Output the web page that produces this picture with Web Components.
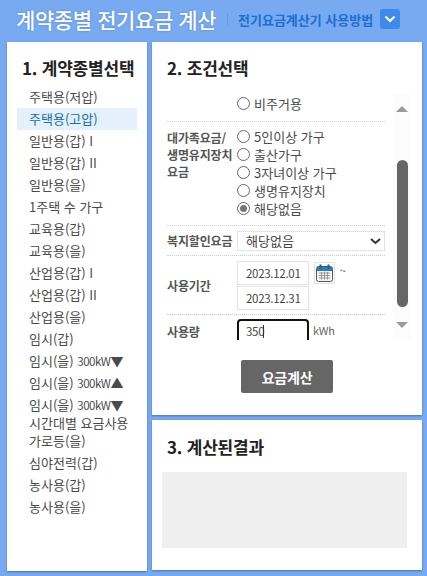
<!DOCTYPE html>
<html lang="ko">
<head>
<meta charset="utf-8">
<title>계약종별 전기요금 계산</title>
<style>
  html, body { margin: 0; padding: 0; }
  body {
    width: 427px;
    height: 576px;
    overflow: hidden;
    background: #78aaf2;
    font-family: "Noto Sans CJK KR", "Noto Sans", sans-serif;
  }
</style>
</head>
<body>
<fee-app></fee-app>
<script>
const FONT = '"Noto Sans CJK KR", "Noto Sans", sans-serif';

class FeeHeader extends HTMLElement {
  connectedCallback() {
    this.attachShadow({ mode: 'open' });
    this.shadowRoot.innerHTML = `
      <style>
        :host { display: flex; align-items: center; height: 42px; padding: 0 0 4px 16px; box-sizing: border-box; font-family: ${FONT}; }
        h1 { margin: 0; width: 200px; font-size: 21px; font-weight: 500; color: #fff; letter-spacing: -.4px; text-shadow: 0 0 2px rgba(40,90,170,.5); white-space: nowrap; }
        .sep { width: 1px; height: 12px; background: #5f97e6; margin: 0 10px 0 11px; }
        a { width: 135px; font-size: 13px; font-weight: 700; color: #1a6fd0; white-space: nowrap; }
        .btn { width: 20px; height: 20px; margin-left: 7px; background: #3d8aea; border-radius: 3px; display: flex; align-items: center; justify-content: center; }
      </style>
      <h1>계약종별 전기요금 계산</h1>
      <span class="sep"></span>
      <a>전기요금계산기 사용방법</a>
      <span class="btn"><svg width="12" height="8" viewBox="0 0 12 8"><path d="M1.5 1.5 6 6l4.5-4.5" fill="none" stroke="#fff" stroke-width="2.2"/></svg></span>
    `;
  }
}

class FeePanel extends HTMLElement {
  connectedCallback() {
    this.attachShadow({ mode: 'open' });
    this.shadowRoot.innerHTML = `
      <style>
        :host { display: block; background: #fff; box-shadow: 0 1px 2px rgba(40,70,120,.55); box-sizing: border-box; font-family: ${FONT}; }
        h2 { margin: 0; font-size: 17px; font-weight: 700; line-height: 22px; color: #222; letter-spacing: -.2px; white-space: nowrap; }
      </style>
      <h2 part="title">${this.getAttribute('heading')}</h2>
      <slot></slot>
    `;
  }
}

class TypeList extends HTMLElement {
  connectedCallback() {
    const kw = '<span class="kw">300kW</span>';
    const items = [
      ['주택용(저압)'], ['주택용(고압)', 'on'], ['일반용(갑) I'], ['일반용(갑) II'], ['일반용(을)'],
      ['1주택 수 가구'], ['교육용(갑)'], ['교육용(을)'], ['산업용(갑) I'], ['산업용(갑) II'],
      ['산업용(을)'], ['임시(갑)'], [`임시(을) ${kw}▼`], [`임시(을) ${kw}▲`], [`임시(을) ${kw}▼`],
      ['시간대별 요금사용', 'tight'], ['가로등(을)'], ['심야전력(갑)'], ['농사용(갑)'], ['농사용(을)']
    ];
    this.attachShadow({ mode: 'open' });
    this.shadowRoot.innerHTML = `
      <style>
        :host { display: block; margin-top: 7px; font-family: ${FONT}; }
        ul { list-style: none; margin: 0; padding: 0; }
        li { height: 22px; line-height: 22px; padding-left: 12px; font-size: 13px; color: #4a4a4a; white-space: nowrap; }
        li.on { background: #e4f0fc; color: #14709e; }
        li.tight { height: 14px; line-height: 14px; }
        .kw { font-size: 11.5px; letter-spacing: -.5px; }
      </style>
      <ul>${items.map(([t, c]) => `<li class="${c || ''}">${t}</li>`).join('')}</ul>
    `;
  }
}

class FormRow extends HTMLElement {
  connectedCallback() {
    this.attachShadow({ mode: 'open' });
    this.shadowRoot.innerHTML = `
      <style>
        :host { display: grid; grid-template-columns: 70px 1fr; align-items: center; border-bottom: 1px dotted #ccc; box-sizing: border-box; font-family: ${FONT}; }
        :host([last]) { border-bottom: 0; }
        :host([top]) { align-items: start; }
        .label { font-size: 12px; line-height: 17px; font-weight: 700; color: #555; letter-spacing: -.15px; white-space: nowrap; }
      </style>
      <div class="label"><slot name="label"></slot></div>
      <div><slot></slot></div>
    `;
  }
}

class RadioOption extends HTMLElement {
  connectedCallback() {
    const on = this.hasAttribute('checked');
    this.attachShadow({ mode: 'open' });
    this.shadowRoot.innerHTML = `
      <style>
        :host { display: flex; align-items: center; height: 18px; font-family: ${FONT}; font-size: 13px; color: #4a4a4a; white-space: nowrap; }
        i { width: 13px; height: 13px; box-sizing: border-box; border: 1px solid #666; border-radius: 50%; background: #fff; margin-right: 4px; display: flex; align-items: center; justify-content: center; flex: none; }
        b { width: 7px; height: 7px; border-radius: 50%; background: #777; }
      </style>
      <i>${on ? '<b></b>' : ''}</i><slot></slot>
    `;
  }
}

class FieldBox extends HTMLElement {
  connectedCallback() {
    this.attachShadow({ mode: 'open' });
    this.shadowRoot.innerHTML = `
      <style>
        :host { display: flex; align-items: center; box-sizing: border-box; width: 72px; height: 24px; padding-left: 8px; border: 1px solid #e2e2e2; font-family: ${FONT}; font-size: 11.5px; color: #444; white-space: nowrap; letter-spacing: -.3px; background: #fff; flex: none; }
        :host([wide]) { width: 148px; height: 20px; font-size: 13px; letter-spacing: 0; position: relative; }
        :host([focus]) { height: 28px; border: 2px solid #111; border-radius: 4px; padding: 0 0 4px 7px; }
        svg { position: absolute; right: 3px; top: 6px; }
        u { display: inline-block; width: 1px; height: 13px; background: #333; margin-left: -1px; }
      </style>
      <slot></slot>
      ${this.hasAttribute('wide') ? '<svg width="11" height="7" viewBox="0 0 11 7"><path d="M1 1l4.5 4L10 1" fill="none" stroke="#333" stroke-width="2"/></svg>' : ''}
      ${this.hasAttribute('focus') ? '<u></u>' : ''}
    `;
  }
}

class CalIcon extends HTMLElement {
  connectedCallback() {
    this.attachShadow({ mode: 'open' });
    this.shadowRoot.innerHTML = `
      <style>
        :host { display: flex; align-items: center; justify-content: center; width: 21px; height: 22px; box-sizing: border-box; border: 1px solid #e2e2e2; }
      </style>
      <svg width="17" height="18" viewBox="0 0 17 18">
        <rect x=".5" y="2.5" width="16" height="15" rx="2" fill="#f3f3f3" stroke="#555"/>
        <path d="M1 3h15v4H1z" fill="#2a7fb8"/>
        <path d="M4.5 .5v4M12.5 .5v4" stroke="#1d5f8f" stroke-width="2"/>
        <path d="M3 9h11M3 11.5h11M3 14h11M5.5 8v7.5M8.5 8v7.5M11.5 8v7.5" stroke="#888" stroke-width=".8"/>
      </svg>
    `;
  }
}

class FakeScrollbar extends HTMLElement {
  connectedCallback() {
    this.attachShadow({ mode: 'open' });
    this.shadowRoot.innerHTML = `
      <style>
        :host { display: flex; flex-direction: column; align-items: center; width: 18px; margin: 8px 0 0 8px; background: #fcfcfc; }
        .up, .down { width: 0; height: 0; border-left: 6px solid transparent; border-right: 6px solid transparent; }
        .up { border-bottom: 6px solid #999; margin-top: 12px; }
        .down { border-top: 6px solid #999; margin-top: 15px; }
        .thumb { width: 11px; height: 147px; background: #666; border-radius: 6px; margin-top: 48px; }
      </style>
      <div class="up"></div><div class="thumb"></div><div class="down"></div>
    `;
  }
}

class ConditionForm extends HTMLElement {
  connectedCallback() {
    this.attachShadow({ mode: 'open' });
    this.shadowRoot.innerHTML = `
      <style>
        :host { display: block; font-family: ${FONT}; }
        .wrap { display: flex; height: 254px; margin-top: 7px; }
        .rows { width: 218px; overflow: hidden; }
        .dates { display: grid; grid-template-columns: 72px 21px auto; column-gap: 5px; row-gap: 1px; align-items: center; }
        .tilde { font-size: 11px; color: #555; align-self: start; margin-top: 1px; }
        .unit { display: flex; gap: 4px; align-items: flex-start; font-size: 11px; letter-spacing: -.3px; color: #666; }
        .unit span { margin-top: 3px; }
        .r1 { height: 36px; padding-top: 8px; box-sizing: border-box; }
        .r2 { height: 104px; padding-top: 5px; box-sizing: border-box; }
        .r2 [slot=label] { display: block; padding-top: 2px; }
        .r3 { height: 30px; }
        .r4 { height: 59px; }
        .r5 { height: 40px; padding-top: 4px; box-sizing: border-box; }
        .r5 [slot=label] { display: block; padding-top: 4px; }
        button { display: block; width: 92px; height: 33px; margin: 20px 0 0 74px; padding: 0; border: 0; border-radius: 2px; background: #666; color: #fff; font: 700 14px ${FONT}; letter-spacing: -.2px; }
      </style>
      <div class="wrap">
        <div class="rows">
          <form-row class="r1" top><span slot="label"></span><radio-option>비주거용</radio-option></form-row>
          <form-row class="r2" top>
            <span slot="label">대가족요금/<br>생명유지장치<br>요금</span>
            <radio-option>5인이상 가구</radio-option>
            <radio-option>출산가구</radio-option>
            <radio-option>3자녀이상 가구</radio-option>
            <radio-option>생명유지장치</radio-option>
            <radio-option checked>해당없음</radio-option>
          </form-row>
          <form-row class="r3"><span slot="label">복지할인요금</span><field-box wide>해당없음</field-box></form-row>
          <form-row class="r4">
            <span slot="label">사용기간</span>
            <div class="dates">
              <field-box>2023.12.01</field-box><cal-icon></cal-icon><span class="tilde">~</span>
              <field-box>2023.12.31</field-box>
            </div>
          </form-row>
          <form-row class="r5" top last>
            <span slot="label">사용량</span>
            <div class="unit"><field-box focus>350</field-box><span>kWh</span></div>
          </form-row>
        </div>
        <fake-scrollbar></fake-scrollbar>
      </div>
      <button type="button">요금계산</button>
    `;
  }
}

class FeeApp extends HTMLElement {
  connectedCallback() {
    this.attachShadow({ mode: 'open' });
    this.shadowRoot.innerHTML = `
      <style>
        :host { display: block; width: 427px; height: 576px; }
        .cols { display: flex; gap: 5px; padding-left: 7px; }
        .left { width: 140px; height: 529px; padding: 15px 10px 0; }
        .left::part(title) { padding-left: 5px; }
        .stack { display: flex; flex-direction: column; gap: 5px; width: 270px; }
        .cond { height: 373px; padding: 15px 11px 0 15px; }
        .result { height: 150px; padding: 16px 15px 0 10px; }
        .result::part(title) { padding-left: 5px; }
        .box { height: 76px; margin-top: 14px; background: #efefef; }
      </style>
      <fee-header></fee-header>
      <div class="cols">
        <fee-panel class="left" heading="1. 계약종별선택"><type-list></type-list></fee-panel>
        <div class="stack">
          <fee-panel class="cond" heading="2. 조건선택"><condition-form></condition-form></fee-panel>
          <fee-panel class="result" heading="3. 계산된결과"><div class="box"></div></fee-panel>
        </div>
      </div>
    `;
  }
}

customElements.define('fee-header', FeeHeader);
customElements.define('fee-panel', FeePanel);
customElements.define('type-list', TypeList);
customElements.define('form-row', FormRow);
customElements.define('radio-option', RadioOption);
customElements.define('field-box', FieldBox);
customElements.define('cal-icon', CalIcon);
customElements.define('fake-scrollbar', FakeScrollbar);
customElements.define('condition-form', ConditionForm);
customElements.define('fee-app', FeeApp);
</script>
</body>
</html>
